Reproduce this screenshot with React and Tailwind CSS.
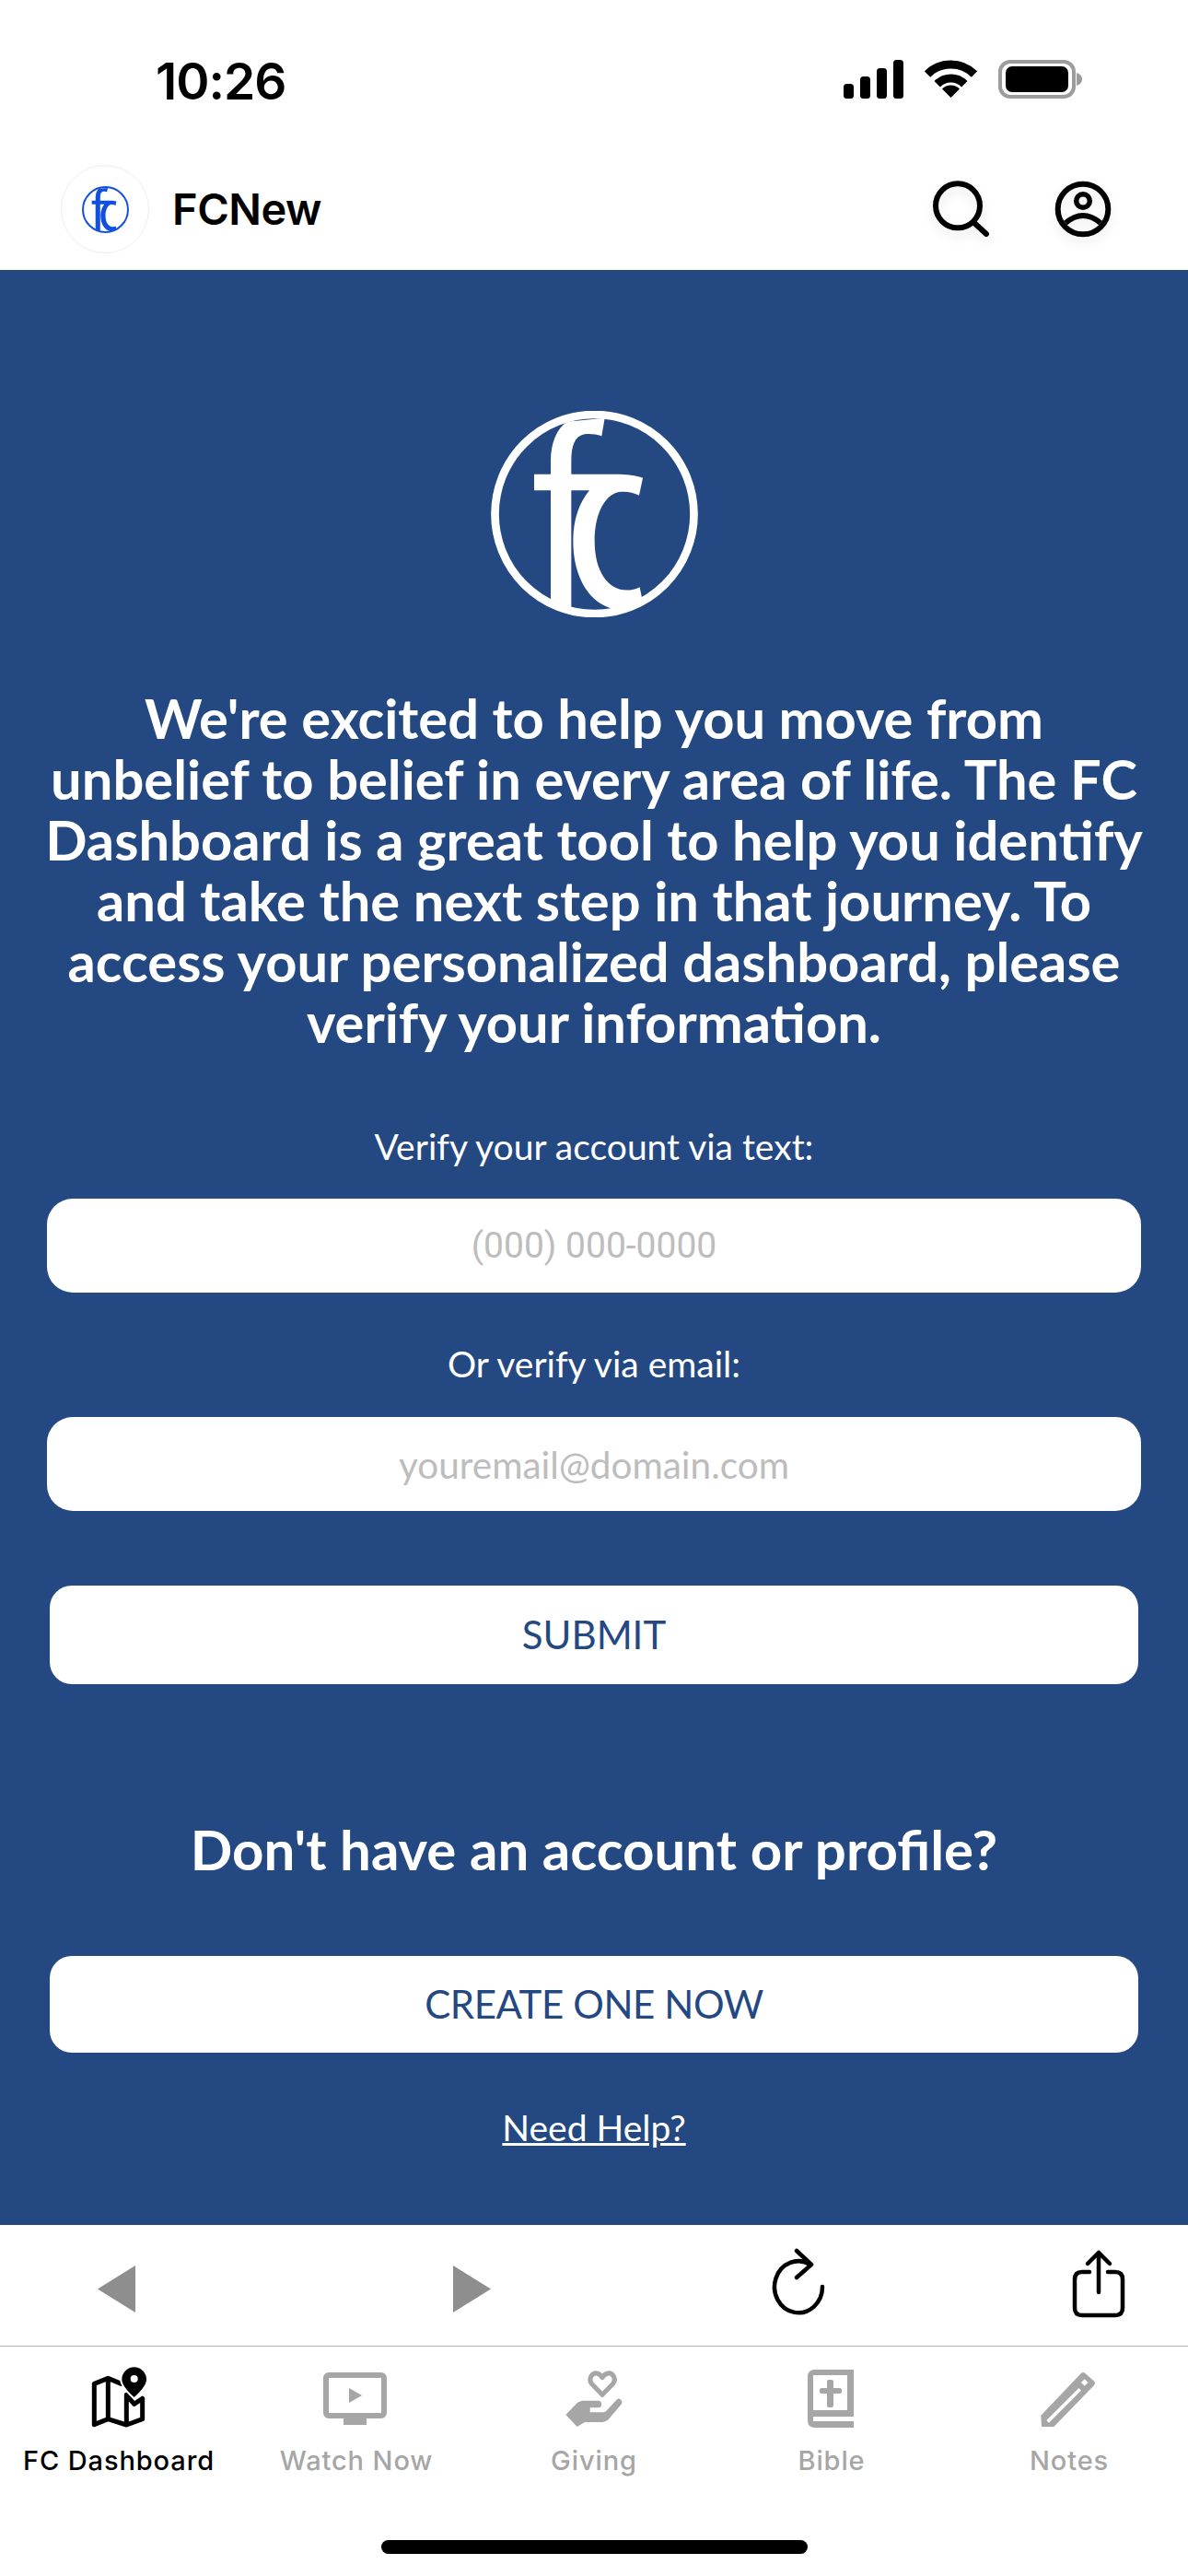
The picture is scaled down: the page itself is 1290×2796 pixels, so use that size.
import React from 'react';

const FcLogo = ({ className }) => (
  <svg viewBox="157 77 675 671" className={className} fill="currentColor">
    <circle cx="494.5" cy="412.5" r="324" fill="none" stroke="currentColor" strokeWidth="26" />
    <path d="M352 690 L352 335 L298 335 L298 283 L352 283 L352 240 C352 180 372 135 405 112 L528 100 L518 158 C500 152 480 150 462 152 C430 158 419 190 419 240 L419 283 L560 283 C600 283 630 287 652 295 L640 352 C620 342 600 338 580 340 C530 345 495 410 495 500 C495 600 540 660 600 660 C615 660 630 657 642 650 L650 690 L560 722 C480 705 425 620 425 500 C425 430 445 375 478 335 L419 335 L419 722 Z" />
  </svg>
);

const SignalIcon = () => (
  <svg width="65" height="42" viewBox="0 0 65 42" fill="black">
    <rect x="0" y="26" width="11" height="16" rx="3.5" />
    <rect x="18" y="18" width="11" height="24" rx="3.5" />
    <rect x="36" y="9" width="11" height="33" rx="3.5" />
    <rect x="54" y="0" width="11" height="42" rx="3.5" />
  </svg>
);

const WifiIcon = () => (
  <svg width="57" height="42" viewBox="0 0 57 42" fill="none" stroke="black" strokeWidth="9">
    <path d="M3 15.5 A36 36 0 0 1 54 15.5" />
    <path d="M13.7 26.2 A21 21 0 0 1 43.3 26.2" />
    <path d="M28.5 41 L19 31.5 A13.4 13.4 0 0 1 38 31.5 Z" fill="black" stroke="none" />
  </svg>
);

const BatteryIcon = () => (
  <svg width="91" height="42" viewBox="0 0 91 42">
    <rect x="2" y="2" width="80" height="38" rx="11" fill="none" stroke="#9c9c9c" strokeWidth="4" />
    <rect x="8" y="7" width="68" height="28" rx="7" fill="black" />
    <path d="M85 14 C88 15 91 17 91 21 C91 25 88 27 85 28 Z" fill="#9c9c9c" />
  </svg>
);

const SearchIcon = () => (
  <svg width="62" height="64" viewBox="0 0 62 64" fill="none" stroke="black" strokeWidth="6" strokeLinecap="round" className="drop-shadow-[0_6px_6px_rgba(0,0,0,0.08)]">
    <circle cx="28" cy="28.3" r="24" />
    <path d="M46 47 L59 59" />
  </svg>
);

const UserIcon = () => (
  <svg width="66" height="66" viewBox="0 0 66 66" fill="none" stroke="black" strokeWidth="6" className="drop-shadow-[0_6px_6px_rgba(0,0,0,0.08)]">
    <circle cx="33" cy="33" r="27.3" />
    <circle cx="33" cy="24" r="7.3" strokeWidth="5.5" />
    <path d="M14 48 Q33 32 52 48" />
  </svg>
);

const MapIcon = () => (
  <svg width="80" height="80" viewBox="0 0 240 240" fill="none" stroke="black" strokeWidth="15" strokeLinejoin="round" strokeLinecap="round">
    <path d="M40 215 L40 82 L85 64 L128 82 M85 64 L85 197 M40 215 L85 197 L145 216 L197 197 L197 130 M145 118 L145 216 M145 118 L170 148 L197 130" />
    <path d="M170 25 C146 25 127 44 127 68 C127 90 150 112 170 130 C190 112 213 90 213 68 C213 44 194 25 170 25 Z" fill="black" stroke="white" strokeWidth="6" />
    <circle cx="170" cy="66" r="12" fill="white" stroke="none" />
  </svg>
);

const WatchIcon = () => (
  <svg width="80" height="80" viewBox="0 0 80 80" fill="#a6a6a6">
    <rect x="7" y="18" width="63" height="44" rx="3" fill="none" stroke="#a6a6a6" strokeWidth="6" />
    <rect x="26" y="65" width="25" height="7" />
    <path d="M32 32 L46 40 L32 48 Z" />
  </svg>
);

const GivingIcon = () => (
  <svg width="80" height="80" viewBox="0 0 240 240" fill="#a6a6a6">
    <path d="M147 118 L112 82 C100 65 115 45 130 48 C138 50 143 55 147 62 C151 55 157 50 165 48 C180 45 195 65 182 82 Z" fill="none" stroke="#a6a6a6" strokeWidth="15" strokeLinejoin="round" />
    <path d="M28 183 L65 145 C72 138 80 137 92 137 L135 137 C148 137 148 160 135 160 L107 160 L107 175 L150 175 C157 175 160 170 165 165 L195 133 C203 125 218 140 208 150 L165 200 C158 205 150 207 140 207 L90 207 L65 222 Z" />
  </svg>
);

const BibleIcon = () => (
  <svg width="80" height="80" viewBox="0 0 80 80" fill="#a6a6a6">
    <path d="M22 12 L64 12 L64 75 L22 75 Q14 75 14 67 L14 20 Q14 12 22 12 Z" />
    <rect x="20" y="18" width="37" height="38" fill="white" />
    <rect x="20" y="63" width="44" height="5" fill="white" />
    <rect x="35" y="23" width="7" height="30" rx="2" />
    <rect x="27" y="32" width="24" height="6" rx="2" />
  </svg>
);

const NotesIcon = () => (
  <svg width="80" height="80" viewBox="0 -15 240 240" fill="#a6a6a6">
    <path d="M158 34 C162 29 168 29 172 33 L200 58 C205 62 205 68 201 72 L70 207 L30 207 L28 170 Z" />
    <path d="M50 190 L155 85" stroke="white" strokeWidth="11" />
    <rect x="162" y="55" width="16" height="16" fill="white" transform="rotate(45 170 63)" />
  </svg>
);

const tabs = [
  { label: 'FC Dashboard', icon: <MapIcon />, active: true },
  { label: 'Watch Now', icon: <WatchIcon /> },
  { label: 'Giving', icon: <GivingIcon /> },
  { label: 'Bible', icon: <BibleIcon /> },
  { label: 'Notes', icon: <NotesIcon /> },
];

export default function App() {
  return (
    <div className="w-[1290px] h-[2796px] flex flex-col bg-white font-['Lato',sans-serif]">
      {/* Status bar */}
      <div className="h-[170px] flex justify-between pt-[61px] pl-[169px] pr-[115px] shrink-0">
        <span className="text-[55px] leading-[54px] font-semibold text-black font-['Inter',sans-serif] tracking-[-1px]">10:26</span>
        <div className="flex items-start gap-[23px] mt-[4px]">
          <SignalIcon />
          <WifiIcon />
          <BatteryIcon />
        </div>
      </div>

      {/* Header */}
      <header className="h-[123px] shrink-0 flex items-center justify-between pl-[66px] pr-[81px] pb-[9px]">
        <div className="flex items-center gap-[25px]">
          <div className="w-[96px] h-[96px] rounded-full border border-[#eeeeee] flex items-center justify-center text-[#1150dc]">
            <FcLogo className="w-[51px] h-[51px]" />
          </div>
          <span className="text-[47px] leading-[56px] font-semibold text-black font-['Inter',sans-serif] tracking-[-0.5px]">FCNew</span>
        </div>
        <div className="flex items-center gap-[69px]">
          <SearchIcon />
          <UserIcon />
        </div>
      </header>

      {/* Verify form */}
      <main className="h-[2122px] shrink-0 bg-[#244882] flex flex-col items-center pt-[153px] text-white">
        <FcLogo className="w-[225px] h-[224px] text-white" />
        <p className="mt-[76px] w-[1200px] text-center text-[59.7px] leading-[66px] font-bold">
          We're excited to help you move from unbelief to belief in every area of life. The FC Dashboard is a great tool to help you identify and take the next step in that journey. To access your personalized dashboard, please verify your information.
        </p>
        <label className="mt-[79px] text-[39px] leading-[46px]">Verify your account via text:</label>
        <input
          placeholder="(000) 000-0000"
          className="mt-[34px] w-[1188px] h-[102px] rounded-[28px] bg-white text-center text-[39px] font-['Roboto',sans-serif] placeholder:text-[#bdbdbd] outline-none"
        />
        <label className="mt-[54px] text-[39px] leading-[46px]">Or verify via email:</label>
        <input
          placeholder="youremail@domain.com"
          className="mt-[35px] w-[1188px] h-[102px] rounded-[28px] bg-white text-center text-[40.5px] placeholder:text-[#bdbdbd] outline-none"
        />
        <button className="mt-[81px] w-[1182px] h-[107px] rounded-[24px] bg-white text-[#244882] text-[42px]">SUBMIT</button>
        <h2 className="mt-[146px] text-[60px] leading-[66px] font-bold">Don't have an account or profile?</h2>
        <button className="mt-[83px] w-[1182px] h-[105px] rounded-[24px] bg-white text-[#244882] text-[42px] tracking-[-0.4px]">CREATE ONE NOW</button>
        <a className="mt-[58px] text-[39px] leading-[46px] underline">Need Help?</a>
      </main>

      {/* Browser controls */}
      <div className="h-[131px] shrink-0 flex items-start pl-[106px]">
        <svg width="41" height="51" viewBox="0 0 41 51" fill="#8e8e8e" className="mt-[44px]"><path d="M41 0 L41 51 L0 25.5 Z" /></svg>
        <svg width="41" height="51" viewBox="0 0 41 51" fill="#8e8e8e" className="mt-[44px] ml-[345px]"><path d="M0 0 L0 51 L41 25.5 Z" /></svg>
        <svg width="62" height="74" viewBox="0 0 62 74" fill="none" stroke="black" strokeWidth="4.5" strokeLinecap="round" strokeLinejoin="round" className="mt-[25px] ml-[303px]">
          <path d="M57 42 A26 28 0 1 1 44 18" />
          <path d="M29 3 L45 18 L29 32" />
        </svg>
        <svg width="60" height="76" viewBox="0 0 60 76" fill="none" stroke="black" strokeWidth="4.5" strokeLinecap="round" strokeLinejoin="round" className="mt-[26px] ml-[265px]">
          <path d="M20 25 L12 25 Q4 25 4 33 L4 64 Q4 72 12 72 L48 72 Q56 72 56 64 L56 33 Q56 25 48 25 L40 25" />
          <path d="M30 4 L30 47 M18 16 L30 4 L42 16" />
        </svg>
      </div>

      {/* Tab bar */}
      <nav className="flex-1 border-t border-[#b5b5b5] pt-[13px]">
        <div className="grid grid-cols-5">
          {tabs.map((tab) => (
            <div key={tab.label} className="flex flex-col items-center">
              {tab.icon}
              <span className={`mt-[13px] text-[29px] leading-[36px] font-medium font-['Inter',sans-serif] tracking-[0.9px] ${tab.active ? 'text-black' : 'text-[#a6a6a6]'}`}>
                {tab.label}
              </span>
            </div>
          ))}
        </div>
        <div className="mt-[68px] mx-auto w-[463px] h-[15px] rounded-full bg-black" />
      </nav>
    </div>
  );
}
